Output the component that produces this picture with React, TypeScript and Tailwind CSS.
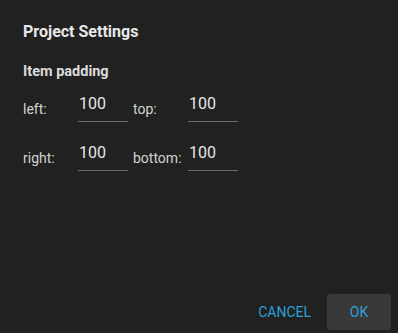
import React from 'react';

const font = { fontFamily: 'Roboto, "Liberation Sans", sans-serif' };

function Field({ label, value }: { label: string; value: string }) {
  return (
    <div className="flex items-end">
      <span className="w-[55px] text-[14px] leading-[20px] pb-[3px] text-[#d2d2d2]">{label}</span>
      <input
        defaultValue={value}
        className="w-[50px] h-[30px] pb-[6px] pl-[1px] bg-transparent text-[16px] text-[#e6e6e6] border-b border-[#6a6a6a] outline-none"
      />
    </div>
  );
}

export default function App() {
  return (
    <div className="w-[398px] h-[333px] bg-[#212121] flex flex-col" style={font}>
      <div className="px-[23px]">
        <h2 className="mt-[22px] text-[16px] leading-[20px] font-bold text-[#e8e8e8]">Project Settings</h2>
        <h3 className="mt-[20px] text-[14.5px] leading-[20px] font-bold text-[#dcdcdc]">Item padding</h3>
        <div className="mt-[10px] flex flex-col gap-[19px]">
          <div className="flex gap-[5px]">
            <Field label="left:" value="100" />
            <Field label="top:" value="100" />
          </div>
          <div className="flex gap-[5px]">
            <Field label="right:" value="100" />
            <Field label="bottom:" value="100" />
          </div>
        </div>
      </div>
      <div className="mt-auto flex justify-end gap-[10px] pr-[7px] pb-[3px]">
        <button className="h-[36px] min-w-[64px] px-[6px] rounded-[2px] text-[14px] font-normal text-[#2ba0d8] uppercase">
          Cancel
        </button>
        <button className="h-[36px] w-[64px] rounded-[3px] bg-[#393939] text-[14px] font-normal text-[#2ba0d8]">
          OK
        </button>
      </div>
    </div>
  );
}
